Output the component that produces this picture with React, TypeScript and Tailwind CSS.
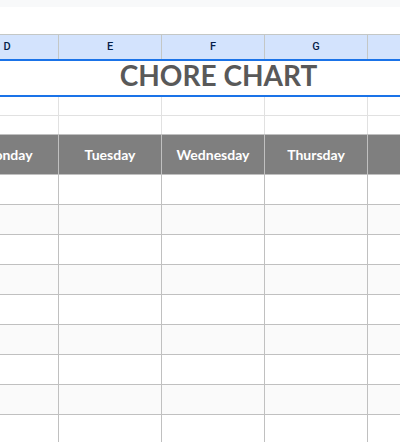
const letters = ["D", "E", "F", "G", "H"];
const days = ["Monday", "Tuesday", "Wednesday", "Thursday", "Friday"];
const rows = Array.from({ length: 10 }, (_, i) => i);

export default function App() {
  return (
    <div className="w-[400px] h-[442px] overflow-hidden bg-white" style={{ fontFamily: "Lato, 'Noto Sans', sans-serif" }}>
      <div className="h-[7px] bg-[#f8f9fa]" />
      <div className="h-[27px] bg-white" />

      <div className="-ml-[44px] w-[515px]">
        {/* column letters */}
        <div className="flex border-t border-[#c4c7c5] bg-[#d3e3fd]">
          {letters.map((l) => (
            <div
              key={l}
              className="w-[103px] h-[24px] shrink-0 border-r border-[#c4c7c5] flex items-center justify-center text-[11px] font-medium text-[#041e49]"
              style={{ fontFamily: "Roboto, Arial, sans-serif" }}
            >
              {l}
            </div>
          ))}
        </div>

        {/* title */}
        <div className="border-y-2 border-[#1a73e8] h-[38px] flex items-center justify-center pl-[10px] pb-[6px]">
          <span className="text-[28px] leading-[34px] font-bold text-[#595959]">CHORE CHART</span>
        </div>

        {/* blank rows */}
        <div className="flex border-b border-[#e1e1e1]">
          {letters.map((l) => (
            <div key={l} className="w-[103px] h-[18px] shrink-0 border-r border-[#e1e1e1]" />
          ))}
        </div>
        <div className="flex">
          {letters.map((l) => (
            <div key={l} className="w-[103px] h-[18px] shrink-0 border-r border-[#e1e1e1]" />
          ))}
        </div>

        {/* day header */}
        <div className="flex bg-[#7f7f7f] border-y border-[#c0c0c0]">
          {days.map((d) => (
            <div
              key={d}
              className="w-[103px] h-[39px] shrink-0 border-r border-[#c0c0c0] flex items-center justify-center text-[14px] font-bold text-white"
            >
              {d}
            </div>
          ))}
        </div>

        {/* chore rows */}
        {rows.map((r) => (
          <div key={r} className={`flex border-b border-[#c0c0c0] ${r % 2 === 1 ? "bg-[#fafafa]" : "bg-white"}`}>
            {days.map((d) => (
              <div key={d} className="w-[103px] h-[29px] shrink-0 border-r border-[#c0c0c0]" />
            ))}
          </div>
        ))}
      </div>
    </div>
  );
}
